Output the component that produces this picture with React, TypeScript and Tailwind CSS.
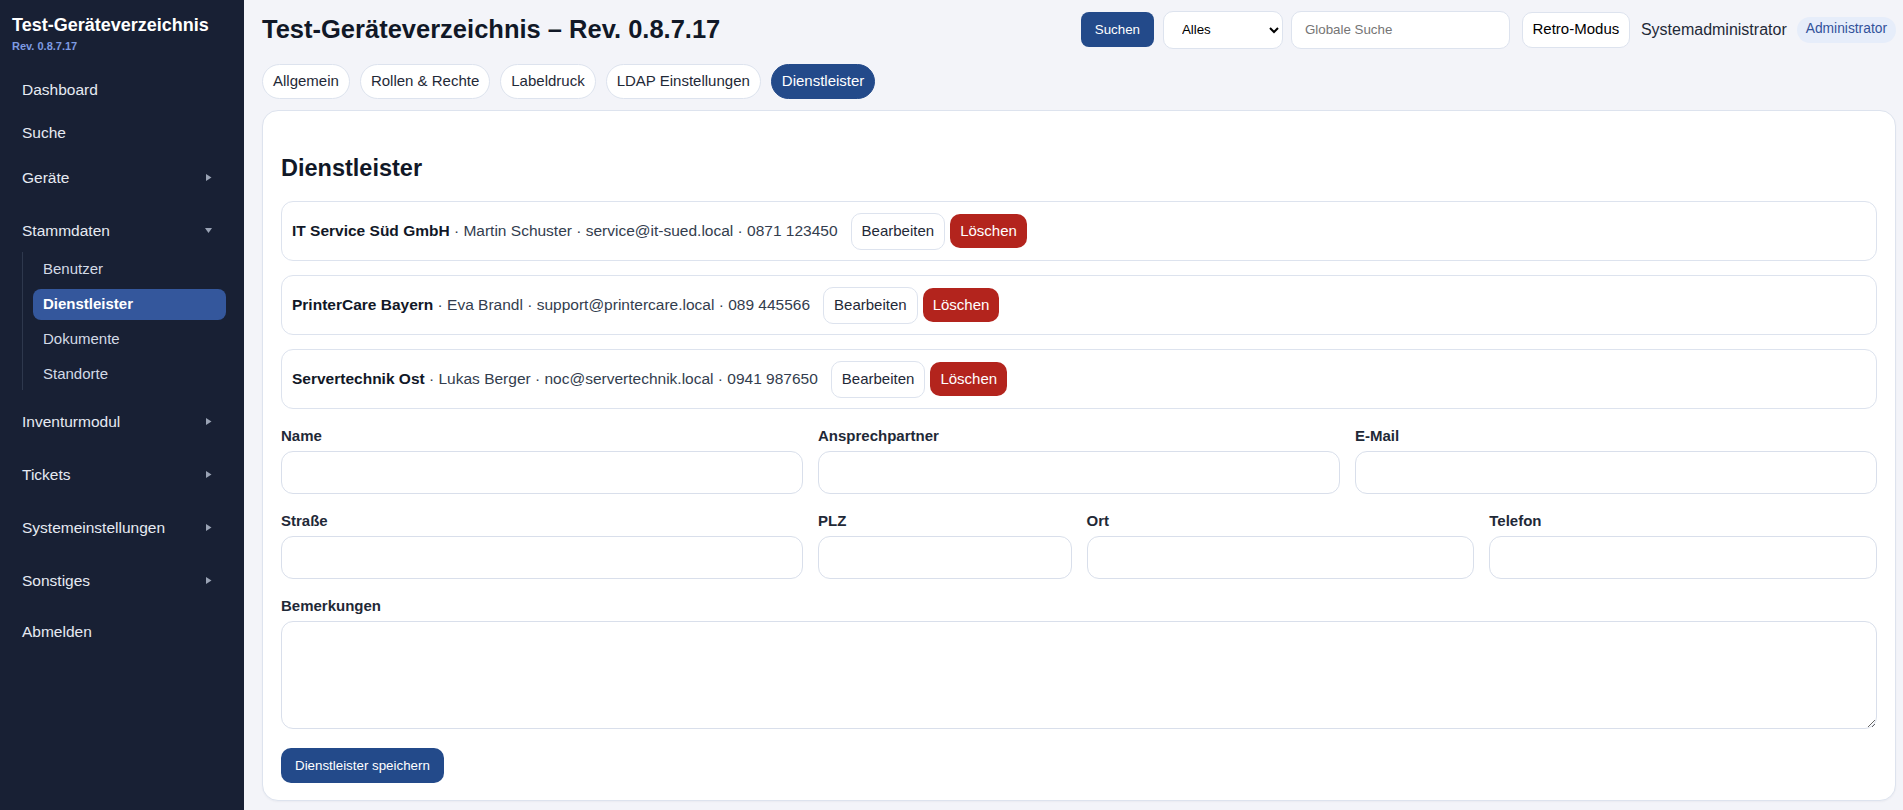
import React from "react";

const sans = "font-['Liberation_Sans',Arial,sans-serif]";

type NavLink = { label: string; kind: "link" };
type NavGroup = { label: string; kind: "group"; open?: boolean; children?: { label: string; active?: boolean }[] };

const nav: (NavLink | NavGroup)[] = [
  { label: "Dashboard", kind: "link" },
  { label: "Suche", kind: "link" },
  { label: "Geräte", kind: "group" },
  {
    label: "Stammdaten",
    kind: "group",
    open: true,
    children: [
      { label: "Benutzer" },
      { label: "Dienstleister", active: true },
      { label: "Dokumente" },
      { label: "Standorte" },
    ],
  },
  { label: "Inventurmodul", kind: "group" },
  { label: "Tickets", kind: "group" },
  { label: "Systemeinstellungen", kind: "group" },
  { label: "Sonstiges", kind: "group" },
  { label: "Abmelden", kind: "link" },
];

const tabs = ["Allgemein", "Rollen & Rechte", "Labeldruck", "LDAP Einstellungen", "Dienstleister"];

const providers = [
  { name: "IT Service Süd GmbH", contact: "Martin Schuster", mail: "service@it-sued.local", phone: "0871 123450" },
  { name: "PrinterCare Bayern", contact: "Eva Brandl", mail: "support@printercare.local", phone: "089 445566" },
  { name: "Servertechnik Ost", contact: "Lukas Berger", mail: "noc@servertechnik.local", phone: "0941 987650" },
];

function Caret({ open }: { open?: boolean }) {
  return (
    <svg width="7" height="7" viewBox="0 0 7 7" className="shrink-0">
      {open ? <polygon points="0,1 7,1 3.5,6" fill="#9aa3b5" /> : <polygon points="1,0 6.5,3.5 1,7" fill="#9aa3b5" />}
    </svg>
  );
}

function Sidebar() {
  return (
    <aside className="w-[244px] shrink-0 bg-[#182034] px-[12px] pt-[14px]">
      <div className="text-[18px] leading-[22px] font-bold text-white">Test-Geräteverzeichnis</div>
      <div className="mt-[3px] text-[11px] leading-[14px] font-bold text-[#7e9be2]">Rev. 0.8.7.17</div>

      <nav className="mt-[15px] flex flex-col">
        {nav.map((item) =>
          item.kind === "link" ? (
            <a key={item.label} className="flex h-[43px] items-center px-[10px] text-[15.5px] text-[#e6eaf2]">
              {item.label}
            </a>
          ) : (
            <div key={item.label} className="mt-[2px] mb-[8px]">
              <button className="flex h-[43px] w-full items-center justify-between pl-[10px] pr-[20px] text-[15.5px] text-[#e6eaf2]">
                <span>{item.label}</span>
                <Caret open={item.open} />
              </button>
              {item.open && item.children && (
                <div className="ml-[10px] mr-[6px] flex flex-col gap-[4px] border-l border-[#2e384d] pt-[2px] pl-[10px]">
                  {item.children.map((c) => (
                    <a
                      key={c.label}
                      className={
                        c.active
                          ? "flex h-[31px] items-center rounded-[8px] bg-[#34579c] px-[10px] text-[15px] font-bold text-white"
                          : "flex h-[31px] items-center rounded-[8px] px-[10px] text-[15px] text-[#d3dae6]"
                      }
                    >
                      {c.label}
                    </a>
                  ))}
                </div>
              )}
            </div>
          )
        )}
      </nav>
    </aside>
  );
}

function Header() {
  return (
    <div className="flex h-[39px] items-center justify-between">
      <h1 className="text-[25.5px] font-bold text-[#111827]">Test-Geräteverzeichnis – Rev. 0.8.7.17</h1>
      <div className="flex items-center">
        <button className="h-[35px] w-[73px] rounded-[8px] bg-[#234a8a] text-[13.33px] text-white">Suchen</button>
        <select className="ml-[9px] h-[38px] w-[120px] rounded-[10px] border border-[#dde3ee] bg-white pl-[14px] pr-[8px] text-[13.33px] text-black">
          <option>Alles</option>
        </select>
        <input
          placeholder="Globale Suche"
          className="ml-[8px] h-[38px] w-[219px] rounded-[10px] border border-[#dde3ee] bg-white px-[13px] text-[13.33px] placeholder:text-[#757575]"
        />
        <button className="ml-[12px] h-[36px] w-[108px] rounded-[10px] border border-[#dde3ee] bg-white text-[15px] text-black">
          Retro-Modus
        </button>
        <span className="ml-[11px] text-[16px] text-[#1f2937]">Systemadministrator</span>
        <span className="ml-[10px] flex h-[26px] items-center rounded-full bg-[#e6edfa] px-[9px] text-[13.8px] text-[#33529a]">
          Administrator
        </span>
      </div>
    </div>
  );
}

function Field({ label, span }: { label: string; span: string }) {
  return (
    <label className={span}>
      <div className="mb-[5px] text-[15px] leading-[20px] font-semibold text-[#1f2937]">{label}</div>
      <input className="block h-[43px] w-full rounded-[12px] border border-[#d9dfeb] bg-white px-3 text-[15px]" />
    </label>
  );
}

export default function App() {
  return (
    <div className={`flex min-h-screen bg-[#f3f4f9] ${sans}`}>
      <Sidebar />

      <main className="flex-1 pt-[10px] pr-[7px] pb-[8px] pl-[18px]">
        <Header />

        <div className="mt-[15px] flex gap-[10px]">
          {tabs.map((t) => (
            <button
              key={t}
              className={
                t === "Dienstleister"
                  ? "h-[35px] rounded-full border border-[#234a8a] bg-[#234a8a] px-[10px] text-[15px] text-white"
                  : "h-[35px] rounded-full border border-[#dde3ee] bg-white px-[10px] text-[15px] text-[#1f2937]"
              }
            >
              {t}
            </button>
          ))}
        </div>

        <section className="mt-[11px] rounded-[16px] border border-[#dde3ee] bg-white px-[18px] pt-[18px] pb-[17px] shadow-[0_1px_2px_rgba(15,23,42,0.04)]">
          <h2 className="mt-[24px] mb-[18px] text-[23.5px] leading-[30px] font-bold text-[#111827]">Dienstleister</h2>

          <div className="flex flex-col gap-[14px]">
            {providers.map((p) => (
              <div key={p.name} className="flex h-[60px] items-center rounded-[12px] border border-[#dde3ee] px-[10px] text-[15.5px] text-[#333d4e]">
                <span>
                  <b className="font-bold text-[#111827]">{p.name}</b> · {p.contact} · {p.mail} · {p.phone}
                </span>
                <button className="ml-[13px] h-[37px] rounded-[10px] border border-[#dde3ee] bg-white px-[10px] text-[15px] text-[#1f2937]">
                  Bearbeiten
                </button>
                <button className="ml-[5px] h-[34px] rounded-[10px] bg-[#b3241d] px-[10px] text-[15px] text-white">Löschen</button>
              </div>
            ))}
          </div>

          <div className="mt-[17px] grid grid-cols-12 gap-x-[15px] gap-y-[17px]">
            <Field label="Name" span="col-span-4" />
            <Field label="Ansprechpartner" span="col-span-4" />
            <Field label="E-Mail" span="col-span-4" />
            <Field label="Straße" span="col-span-4" />
            <Field label="PLZ" span="col-span-2" />
            <Field label="Ort" span="col-span-3" />
            <Field label="Telefon" span="col-span-3" />
          </div>

          <label className="mt-[17px] block">
            <div className="mb-[5px] text-[15px] leading-[20px] font-semibold text-[#1f2937]">Bemerkungen</div>
            <textarea className="block h-[108px] w-full rounded-[12px] border border-[#d9dfeb] bg-white px-3 py-2 text-[15px]" />
          </label>

          <button className="mt-[19px] h-[35px] rounded-[10px] bg-[#234a8a] px-[14px] text-[13.33px] text-white">
            Dienstleister speichern
          </button>
        </section>
      </main>
    </div>
  );
}
